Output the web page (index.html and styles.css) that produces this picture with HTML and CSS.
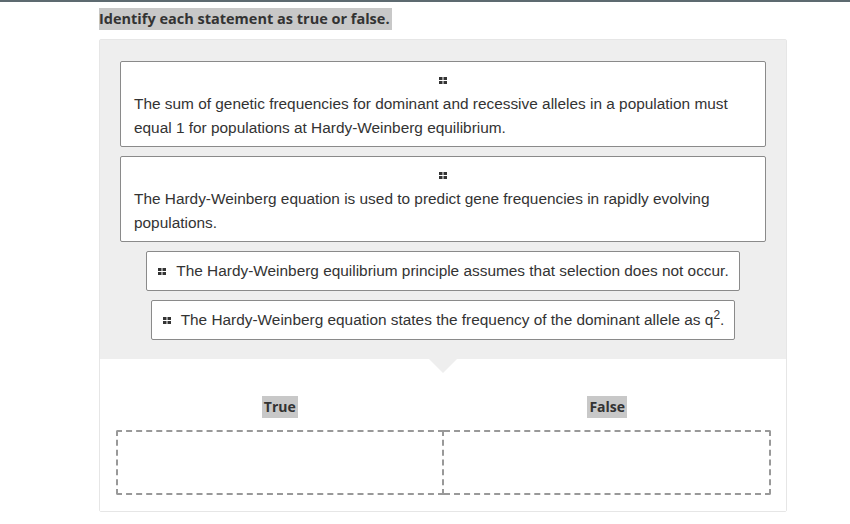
FILE: index.html
```html
<!DOCTYPE html>
<html>
<head>
<meta charset="utf-8">
<link rel="stylesheet" href="styles.css">
</head>
<body>
<div class="topline"></div>
<div class="wrap">
  <div class="title"><span class="hl">Identify each statement as true or false.</span></div>
  <div class="panel">
    <div class="pool">
      <div class="card wide">
        <div class="handle-row"><svg class="handle" width="8" height="7" viewBox="0 0 8 7"><rect x="0" y="0" width="3.5" height="3"/><rect x="4.5" y="0" width="3.5" height="3"/><rect x="0" y="4" width="3.5" height="3"/><rect x="4.5" y="4" width="3.5" height="3"/></svg></div>
        <div class="txt">The sum of genetic frequencies for dominant and recessive alleles in a population must equal 1 for populations at Hardy-Weinberg equilibrium.</div>
      </div>
      <div class="card wide">
        <div class="handle-row"><svg class="handle" width="8" height="7" viewBox="0 0 8 7"><rect x="0" y="0" width="3.5" height="3"/><rect x="4.5" y="0" width="3.5" height="3"/><rect x="0" y="4" width="3.5" height="3"/><rect x="4.5" y="4" width="3.5" height="3"/></svg></div>
        <div class="txt">The Hardy-Weinberg equation is used to predict gene frequencies in rapidly evolving populations.</div>
      </div>
      <div class="row"><div class="card inline"><svg class="handle" width="8" height="7" viewBox="0 0 8 7"><rect x="0" y="0" width="3.5" height="3"/><rect x="4.5" y="0" width="3.5" height="3"/><rect x="0" y="4" width="3.5" height="3"/><rect x="4.5" y="4" width="3.5" height="3"/></svg><span class="txt">The Hardy-Weinberg equilibrium principle assumes that selection does not occur.</span></div></div>
      <div class="row"><div class="card inline"><svg class="handle" width="8" height="7" viewBox="0 0 8 7"><rect x="0" y="0" width="3.5" height="3"/><rect x="4.5" y="0" width="3.5" height="3"/><rect x="0" y="4" width="3.5" height="3"/><rect x="4.5" y="4" width="3.5" height="3"/></svg><span class="txt">The Hardy-Weinberg equation states the frequency of the dominant allele as q<sup>2</sup>.</span></div></div>
    </div>
    <div class="targets">
      <div class="col">
        <div class="label"><span class="hl">True</span></div>
        <div class="zone left"></div>
      </div>
      <div class="col">
        <div class="label"><span class="hl">False</span></div>
        <div class="zone right"></div>
      </div>
    </div>
  </div>
</div>
</body>
</html>
```
FILE: styles.css
```css
html, body { margin: 0; padding: 0; background: #fff; }
body { font-family: "Liberation Sans", Arial, sans-serif; color: #333; }
.topline { height: 2px; background: #5d6a70; }
.wrap { margin-left: 99px; width: 688px; }
.title { font-family: "Open Sans", sans-serif; font-weight: 700; font-size: 14.5px; line-height: 22px; padding-top: 6px; height: 31px; }
.hl { background: #c8c8c8; color: #333; padding: 0 2px 0 0; display: inline-block; }
.panel { border: 1px solid #e6e6e6; border-radius: 2px; }
.pool { background: #eeeeee; padding: 21px 20px 19px; display: flex; flex-direction: column; gap: 9px; }
.card { background: #fff; border: 1px solid #8a8a8a; border-radius: 2px; font-size: 15.4px; line-height: 24px; color: #333; }
.card.wide { padding: 6px 13px 6px 13px; }
.handle-row { height: 24px; display: flex; align-items: center; justify-content: center; }
.handle { fill: #333; display: block; flex: none; }
.row { display: flex; justify-content: center; }
.card.inline { display: flex; align-items: center; gap: 10px; padding: 7px 10px 7px 11px; }
sup { font-size: 12px; line-height: 0; vertical-align: 6px; }
.targets { position: relative; background: #fff; display: grid; grid-template-columns: 1fr 1fr; padding: 37px 15px 16px 16px; }
.targets::before { content: ""; position: absolute; top: 0; left: 329px; border-left: 14px solid transparent; border-right: 14px solid transparent; border-top: 14px solid #eeeeee; }
.col { display: flex; flex-direction: column; align-items: center; }
.label { font-family: "Open Sans", sans-serif; font-weight: 700; font-size: 14px; line-height: 22px; height: 22px; margin-bottom: 12px; }
.label .hl { padding: 0 2px; }
.zone { width: 100%; box-sizing: border-box; height: 65px; border: 2px dashed #999; }
.zone.left { border-radius: 2px 0 0 2px; }
.zone.right { border-left: none; border-radius: 0 2px 2px 0; }
```
